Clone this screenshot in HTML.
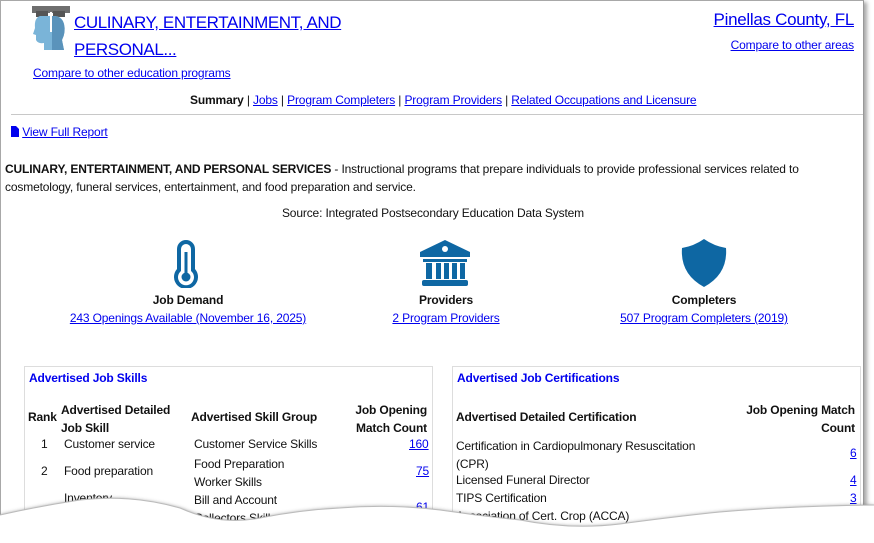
<!DOCTYPE html>
<html style="width:874px;height:543px;overflow:hidden"><head><meta charset="utf-8"><style>
*{margin:0;padding:0;box-sizing:border-box}
body{width:874px;height:543px;background:#fff;font-family:"Liberation Sans",sans-serif;font-size:12px;letter-spacing:-0.15px;color:#111;position:relative;overflow:hidden}
a{color:#0000ee;text-decoration:underline}
.p{position:absolute;white-space:nowrap}
#page{position:absolute;left:0;top:0;width:864px;height:543px;border:1px solid #a8a8a8;border-right:1px solid #999;box-shadow:3px 2px 4px rgba(0,0,0,.35);background:#fff;overflow:hidden}
.b{font-weight:bold}
.box{position:absolute;border:1px solid #ddd;top:365px;height:200px}
.c{text-align:center}
.r{text-align:right}
</style></head><body>
<div id="page">
<svg class="p" style="left:31px;top:5px" width="38" height="44" viewBox="0 0 38 44">
<rect x="0" y="0" width="38" height="7" fill="#6e6e6e"/>
<rect x="4" y="5" width="12" height="6" fill="#555"/><rect x="21" y="5" width="12" height="6" fill="#555"/>
<path d="M8 10 Q2 12 3 22 L1 28 L4 29 L4 34 Q6 38 12 37 L12 44 L32 44 L30 34 Q34 26 32 18 Q30 10 22 10 Z" fill="#7ab4d8"/>
<path d="M20 10 Q30 10 32 18 Q34 26 30 34 L32 44 L20 44 Z" fill="#5a93bb"/>
<rect x="18" y="6" width="2" height="20" fill="#fff"/>
</svg>
<a class="p" style="left:73px;top:8px;font-size:17px;letter-spacing:-0.4px;line-height:27px">CULINARY, ENTERTAINMENT, AND<br>PERSONAL...</a>
<a class="p" style="left:32px;top:65px">Compare to other education programs</a>
<a class="p" style="right:9px;top:9px;font-size:17px;letter-spacing:-0.3px">Pinellas County, FL</a>
<a class="p" style="right:9px;top:37px">Compare to other areas</a>
<div class="p" style="left:189px;top:92px"><span class="b">Summary</span> | <a>Jobs</a> | <a>Program Completers</a> | <a>Program Providers</a> | <a>Related Occupations and Licensure</a></div>
<div class="p" style="left:10px;top:113px;width:852px;border-top:1px solid #c8c8c8"></div>
<div class="p" style="left:10px;top:124px"><svg width="8" height="11" style="vertical-align:-1px"><path d="M0 0H5L8 3V11H0Z" fill="#0000ee"/></svg> <a>View Full Report</a></div>
<div class="p" style="left:4px;top:159px;line-height:18px"><span class="b">CULINARY, ENTERTAINMENT, AND PERSONAL SERVICES</span> - Instructional programs that prepare individuals to provide professional services related to<br>cosmetology, funeral services, entertainment, and food preparation and service.</div>
<div class="p c" style="left:0;width:864px;top:205px">Source: Integrated Postsecondary Education Data System</div>
<svg class="p" style="left:172px;top:237px" width="26" height="50" viewBox="0 0 26 50"><path d="M13 2 a9 9 0 0 1 9 9 v20 a12 12 0 1 1 -18 0 v-20 a9 9 0 0 1 9 -9z" fill="#0e67a3"/><path d="M13 6 a5 5 0 0 1 5 5 v22 a8 8 0 1 1 -10 0 v-22 a5 5 0 0 1 5 -5z" fill="#fff"/><rect x="11.5" y="14" width="3" height="22" fill="#0e67a3"/><circle cx="13" cy="39" r="4.5" fill="#0e67a3"/></svg>
<svg class="p" style="left:418px;top:237px" width="52" height="50" viewBox="0 0 52 50"><path d="M26 2 L51 14 V19 H1 V14 Z" fill="#0e67a3"/><circle cx="26" cy="11" r="3" fill="#fff"/><rect x="4" y="21" width="44" height="3" fill="#0e67a3"/><rect x="7" y="25" width="6" height="16" fill="#0e67a3"/><rect x="17" y="25" width="5" height="16" fill="#0e67a3"/><rect x="25" y="25" width="5" height="16" fill="#0e67a3"/><rect x="33" y="25" width="5" height="16" fill="#0e67a3"/><rect x="41" y="25" width="5" height="16" fill="#0e67a3"/><rect x="3" y="42" width="46" height="6" rx="2" fill="#0e67a3"/></svg>
<svg class="p" style="left:680px;top:237px" width="46" height="50" viewBox="0 0 46 50"><path d="M23 1 Q33 8 45 10 Q47 36 23 49 Q-1 36 1 10 Q13 8 23 1Z" fill="#0e67a3"/></svg>
<div class="p c b" style="left:87px;width:200px;top:292px">Job Demand</div>
<a class="p c" style="left:37px;width:300px;top:310px">243 Openings Available (November 16, 2025)</a>
<div class="p c b" style="left:345px;width:200px;top:292px">Providers</div>
<a class="p c" style="left:345px;width:200px;top:310px">2 Program Providers</a>
<div class="p c b" style="left:603px;width:200px;top:292px">Completers</div>
<a class="p c" style="left:553px;width:300px;top:310px">507 Program Completers (2019)</a>
<div class="box" style="left:23px;width:409px"></div>
<div class="box" style="left:451px;width:409px"></div>
<div class="p b" style="left:28px;top:370px;color:#0000ee">Advertised Job Skills</div>
<div class="p b" style="left:456px;top:370px;color:#0000ee">Advertised Job Certifications</div>
<div class="p b" style="left:27px;top:409px">Rank</div>
<div class="p b" style="left:60px;top:400px;line-height:18px">Advertised Detailed<br>Job Skill</div>
<div class="p b" style="left:190px;top:409px">Advertised Skill Group</div>
<div class="p b r" style="right:436px;top:400px;line-height:18px">Job Opening<br>Match Count</div>
<div class="p" style="left:40px;top:436px">1</div><div class="p" style="left:63px;top:436px">Customer service</div><div class="p" style="left:193px;top:436px">Customer Service Skills</div><a class="p" style="left:408px;top:436px">160</a>
<div class="p" style="left:40px;top:463px">2</div><div class="p" style="left:63px;top:463px">Food preparation</div><div class="p" style="left:193px;top:454px;line-height:18px">Food Preparation<br>Worker Skills</div><a class="p" style="left:415px;top:463px">75</a>
<div class="p" style="left:40px;top:505px">3</div><div class="p" style="left:63px;top:490px">Inventory</div><div class="p" style="left:193px;top:490px;line-height:18px">Bill and Account<br>Collectors Skills</div><a class="p" style="left:415px;top:499px">61</a>
<div class="p b" style="left:455px;top:409px">Advertised Detailed Certification</div>
<div class="p b r" style="right:8px;top:400px;line-height:18px">Job Opening Match<br>Count</div>
<div class="p" style="left:455px;top:436px;line-height:18px">Certification in Cardiopulmonary Resuscitation<br>(CPR)</div><a class="p" style="left:849px;top:445px">6</a>
<div class="p" style="left:455px;top:472px">Licensed Funeral Director</div><a class="p" style="left:849px;top:472px">4</a>
<div class="p" style="left:455px;top:490px">TIPS Certification</div><a class="p" style="left:849px;top:490px">3</a>
<div class="p" style="left:455px;top:508px">Association of Cert. Crop (ACCA)</div><a class="p" style="left:849px;top:508px">3</a>
</div>
<svg class="p" style="left:0;top:480px" width="874" height="63" viewBox="0 0 874 63">
<defs><filter id="s" filterUnits="userSpaceOnUse" x="-20" y="-20" width="920" height="110"><feGaussianBlur stdDeviation="2"/></filter></defs>
<path d="M0 35 Q40 26 80 20 Q130 14 180 28 Q220 46 260 38 Q300 30 340 28 Q390 24 440 30 Q480 36 520 40 Q570 50 620 44 Q680 36 720 32 Q790 26 874 25" fill="none" stroke="#555" stroke-width="4" filter="url(#s)" transform="translate(0,3)"/>
<path d="M0 35 Q40 26 80 20 Q130 14 180 28 Q220 46 260 38 Q300 30 340 28 Q390 24 440 30 Q480 36 520 40 Q570 50 620 44 Q680 36 720 32 Q790 26 874 25 V63 H0Z" fill="#fff"/>
<path d="M0 35 Q40 26 80 20 Q130 14 180 28 Q220 46 260 38 Q300 30 340 28 Q390 24 440 30 Q480 36 520 40 Q570 50 620 44 Q680 36 720 32 Q790 26 874 25" fill="none" stroke="#bbb" stroke-width="1"/>
</svg>
</body></html>
